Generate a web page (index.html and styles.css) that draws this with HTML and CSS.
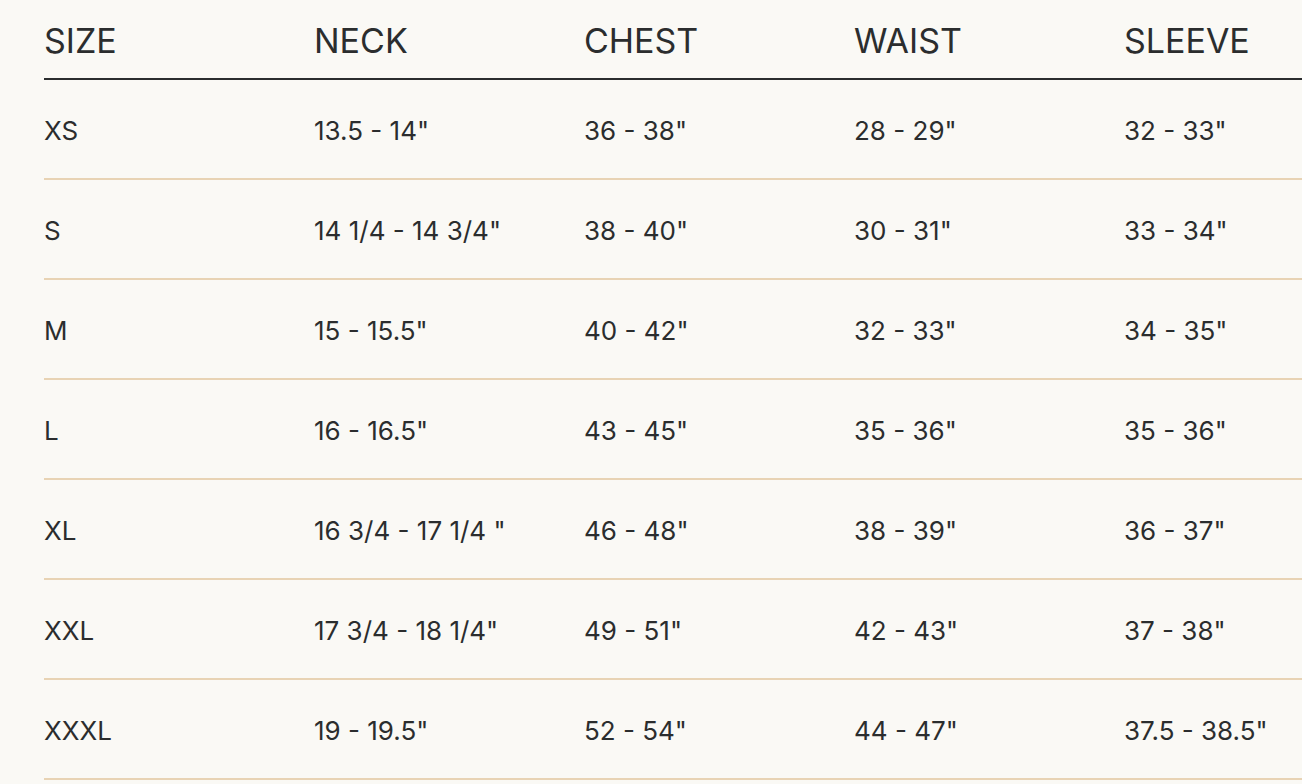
FILE: index.html
```html
<!DOCTYPE html>
<html>
<head>
<meta charset="utf-8">
<link rel="stylesheet" href="styles.css">
</head>
<body>
<div class="wrap">
  <table class="sizes">
    <thead>
      <tr><th>SIZE</th><th>NECK</th><th>CHEST</th><th>WAIST</th><th>SLEEVE</th></tr>
    </thead>
    <tbody>
      <tr><td>XS</td><td>13.5 - 14"</td><td>36 - 38"</td><td>28 - 29"</td><td>32 - 33"</td></tr>
      <tr><td>S</td><td>14 1/4 - 14 3/4"</td><td>38 - 40"</td><td>30 - 31"</td><td>33 - 34"</td></tr>
      <tr><td>M</td><td>15 - 15.5"</td><td>40 - 42"</td><td>32 - 33"</td><td>34 - 35"</td></tr>
      <tr><td>L</td><td>16 - 16.5"</td><td>43 - 45"</td><td>35 - 36"</td><td>35 - 36"</td></tr>
      <tr><td>XL</td><td>16 3/4 - 17 1/4 "</td><td>46 - 48"</td><td>38 - 39"</td><td>36 - 37"</td></tr>
      <tr><td>XXL</td><td>17 3/4 - 18 1/4"</td><td>49 - 51"</td><td>42 - 43"</td><td>37 - 38"</td></tr>
      <tr><td>XXXL</td><td>19 - 19.5"</td><td>52 - 54"</td><td>44 - 47"</td><td>37.5 - 38.5"</td></tr>
    </tbody>
  </table>
</div>
</body>
</html>
```
FILE: styles.css
```css
html, body {
  margin: 0;
  padding: 0;
  background: #faf9f5;
  overflow: hidden;
}
.wrap {
  padding: 1px 0 0 44px;
  width: 1400px;
}
.sizes {
  border-collapse: collapse;
  table-layout: fixed;
  width: 1350px;
  font-family: Inter, "Noto Sans", sans-serif;
  color: #2b2d2e;
}
.sizes th, .sizes td {
  width: 270px;
  padding: 0;
  text-align: left;
  white-space: nowrap;
}
.sizes th {
  font-size: 34px;
  font-weight: 400;
  height: 78px;
  vertical-align: bottom;
  padding-bottom: 17px;
  box-sizing: border-box;
  line-height: 40px;
  border-bottom: 2px solid #2b2d2e;
}
.sizes td {
  font-size: 26px;
  height: 100px;
  box-sizing: border-box;
  padding-top: 3px;
  line-height: 30px;
  vertical-align: middle;
  border-bottom: 2px solid #e8d3b4;
}
```
